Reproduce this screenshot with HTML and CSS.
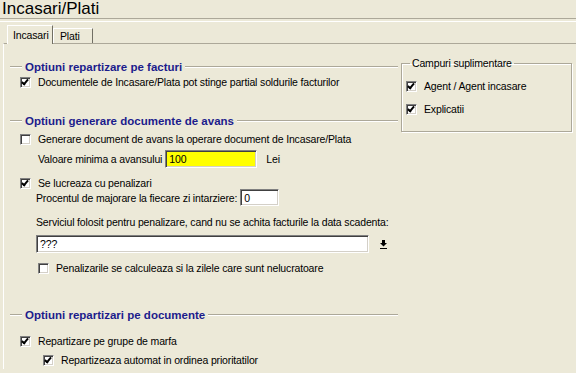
FILE: index.html
```html
<!DOCTYPE html>
<html lang="ro">
<head>
    <meta charset="UTF-8">
    <title>Incasari/Plati</title>
    <link rel="stylesheet" href="styles.css">
</head>
<body>
    <header class="header">
        <h1 class="title">Incasari/Plati</h1>
    </header>

    <div class="tabs">
        <div class="tab active">Incasari</div>
        <div class="tab">Plati</div>
    </div>

    <div class="panel">
        <div class="main">
            <!-- repartizare pe facturi -->
            <h2 class="group-title g1"><span>Optiuni repartizare pe facturi</span></h2>
            <label class="row r-doc"><span class="check on"></span>Documentele de Incasare/Plata pot stinge partial soldurile facturilor</label>

            <!-- documente de avans -->
            <h2 class="group-title g2"><span>Optiuni generare documente de avans</span></h2>
            <label class="row r-gen"><span class="check"></span>Generare document de avans la operare document de Incasare/Plata</label>
            <div class="row r-val">
                <span class="field-label">Valoare minima a avansului</span>
                <span class="input yellow">100</span>
                <span class="unit">Lei</span>
            </div>
            <label class="row r-pen"><span class="check on"></span>Se lucreaza cu penalizari</label>
            <div class="row r-proc">
                <span class="field-label">Procentul de majorare la fiecare zi intarziere:</span>
                <span class="input small">0</span>
            </div>
            <div class="row r-serv">Serviciul folosit pentru penalizare, cand nu se achita facturile la data scadenta:</div>
            <div class="row r-servin">
                <span class="input wide">???</span>
                <svg class="pick" width="7" height="9" viewBox="0 0 7 9">
                    <rect x="2" y="0" width="3" height="3" fill="#000"/>
                    <polygon points="0,3 7,3 3.5,6.5" fill="#000"/>
                    <rect x="0" y="8" width="7" height="1" fill="#000"/>
                </svg>
            </div>
            <label class="row r-nel"><span class="check"></span>Penalizarile se calculeaza si la zilele care sunt nelucratoare</label>

            <!-- repartizari pe documente -->
            <h2 class="group-title g3"><span>Optiuni repartizari pe documente</span></h2>
            <label class="row r-rep"><span class="check on"></span>Repartizare pe grupe de marfa</label>
            <label class="row r-auto"><span class="check on"></span>Repartizeaza automat in ordinea prioritatilor</label>
        </div>

        <fieldset class="side">
            <legend>Campuri suplimentare</legend>
            <label class="row r-agent"><span class="check on"></span>Agent / Agent incasare</label>
            <label class="row r-expl"><span class="check on"></span>Explicatii</label>
        </fieldset>
    </div>
</body>
</html>
```

FILE: styles.css
```css
/* fereastra in stil Windows clasic */
body {
    margin: 0;
    background-color: #ece9d8;
    font-family: "Liberation Sans", Arial, sans-serif;
    font-size: 10.5px;
    letter-spacing: -0.15px;
    color: #000000;
    height: 373px;
    overflow: hidden;
}

.header {
    border-bottom: 1px solid #ffffff;
    padding-bottom: 2px;
}

.title {
    margin: 0;
    padding-left: 2px;
    height: 18px;
    line-height: 18px;
    font-size: 17px;
    font-weight: normal;
    letter-spacing: 0;
    border-bottom: 1px solid #aca899;
}

/* taburi */
.tabs {
    display: flex;
    align-items: flex-end;
    padding: 3px 0 0 7px;
    position: relative;
    z-index: 1;
}

.tab {
    box-sizing: border-box;
    width: 40px;
    height: 15px;
    line-height: 15px;
    padding-left: 6px;
    border: 1px solid #ffffff;
    border-right-color: #716f64;
    border-bottom: none;
}

.tab.active {
    width: 46px;
    height: 19px;
    line-height: 18px;
    padding-left: 5px;
    margin-bottom: -1px;
    background-color: #ece9d8;
}

.panel {
    display: flex;
    align-items: flex-start;
    margin-left: 3px;
    border-top: 1px solid #aca899;
    border-left: 1px solid #ffffff;
}

.main {
    width: 394px;
}

/* titluri de grup */
.group-title {
    display: flex;
    align-items: center;
    height: 13px;
    margin: 0 0 0 6px;
    font-size: 11.5px;
    font-weight: bold;
    letter-spacing: 0;
    color: #1c1c8c;
}

.group-title::before,
.group-title::after {
    content: '';
    height: 0;
    border-top: 1px solid #aca899;
    border-bottom: 1px solid #ffffff;
}

.group-title::before {
    width: 12px;
}

.group-title::after {
    flex: 1;
}

.group-title span {
    padding: 0 3px;
}

.g1 { margin-top: 16px; }
.g2 { margin-top: 23px; }
.g3 { margin-top: 31px; }

/* randuri */
.row {
    display: flex;
    align-items: center;
    height: 18px;
    padding-left: 16px;
    white-space: nowrap;
}

.r-gen { margin-top: 3px; }
.r-val { margin-top: 2px; padding-left: 34px; }
.r-pen { margin-top: 9px; height: 12px; }
.r-proc { height: 17px; padding-left: 32px; }
.r-serv { margin-top: 7px; padding-left: 32px; }
.r-servin { margin-top: 4px; padding-left: 32px; }
.r-nel { margin-top: 6px; padding-left: 34px; }
.r-rep { margin-top: 11px; }
.r-auto { margin-top: 1px; padding-left: 39px; }

.field-label {
    margin-right: 3px;
}

/* casute de bifat */
.check {
    flex: none;
    position: relative;
    width: 9px;
    height: 9px;
    margin-right: 7px;
    background-color: #ffffff;
    border-top: 1px solid #808080;
    border-left: 1px solid #808080;
    border-right: 1px solid #ffffff;
    border-bottom: 1px solid #ffffff;
    box-shadow: inset 1px 1px 0 #404040, inset -1px -1px 0 #d4d0c8;
}

.check.on::after {
    content: '';
    position: absolute;
    left: 2px;
    top: 0;
    width: 2px;
    height: 5px;
    border-right: 2px solid #000000;
    border-bottom: 2px solid #000000;
    transform: rotate(40deg);
}

/* campuri de text */
.input {
    box-sizing: border-box;
    height: 18px;
    line-height: 14px;
    padding: 1px 3px;
    background-color: #ffffff;
    border-top: 1px solid #808080;
    border-left: 1px solid #808080;
    border-right: 1px solid #ffffff;
    border-bottom: 1px solid #ffffff;
    box-shadow: inset 1px 1px 0 #404040, inset -1px -1px 0 #d4d0c8;
}

.input.yellow {
    width: 92px;
    background-color: #ffff00;
}

.input.small {
    width: 39px;
    height: 17px;
}

.input.wide {
    width: 333px;
}

.unit {
    margin-left: 9px;
}

.pick {
    margin-left: 11px;
}

/* grupul din dreapta */
.side {
    width: 165px;
    margin: 13px 0 0 3px;
    padding: 0 0 13px 4px;
    border: 1px solid #aca899;
    box-shadow: inset 1px 1px 0 #ffffff, 1px 1px 0 #ffffff;
}

.side legend {
    margin-left: 4px;
    padding: 0 2px;
    font-size: 10.5px;
}

.side .row {
    padding-left: 0;
}

.r-agent { margin-top: 8px; }
.r-expl { margin-top: 5px; }
```
